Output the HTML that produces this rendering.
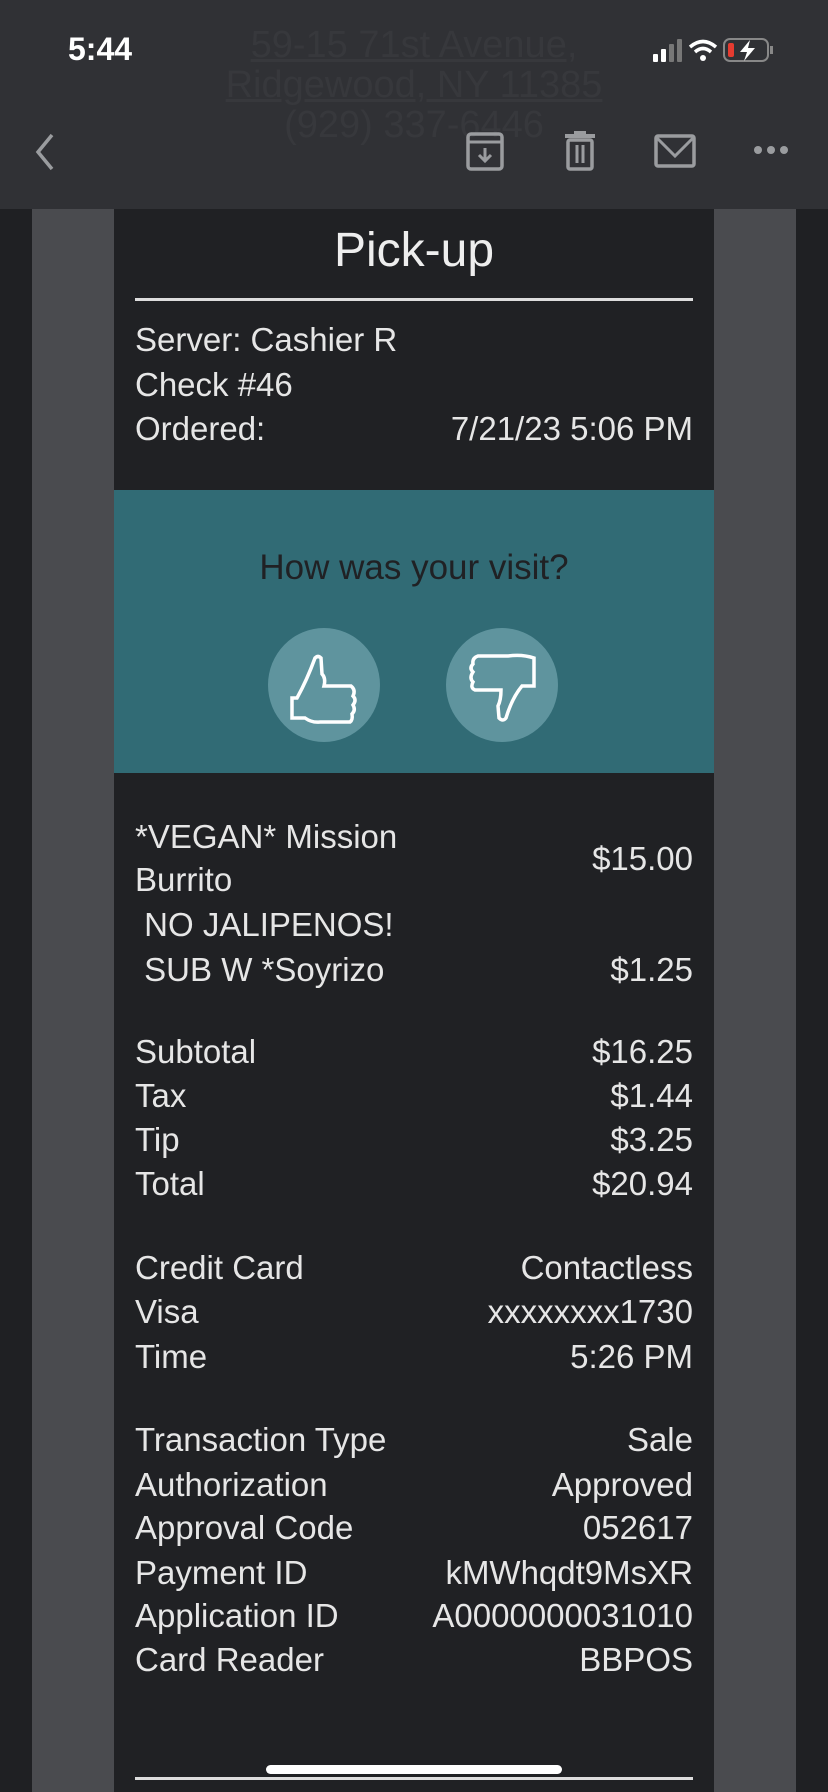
<!DOCTYPE html>
<html><head><meta charset="utf-8"><style>
*{margin:0;padding:0;box-sizing:border-box}
body{width:828px;height:1792px;background:#1f2023;position:relative;overflow:hidden;font-family:"Liberation Sans",sans-serif;color:#e6e6e6}
.g{position:absolute;top:0;height:1792px;background:#4a4b4f;width:82px}
#rc{position:absolute;left:114px;width:600px;top:0;height:1792px;background:#202124}
.r{position:absolute;left:135px;width:558px;height:40px;line-height:40px;font-size:33px;display:flex;justify-content:space-between;white-space:nowrap}
#hdr{position:absolute;left:0;top:0;width:828px;height:209px;background:#303135}
.ghost{position:absolute;left:0;width:828px;text-align:center;color:#37383c;font-size:38px;text-decoration:underline}
</style></head><body>
<div class="g" style="left:32px"></div><div class="g" style="left:714px"></div>
<div id="rc"></div>
<div id="hdr">
 <div class="ghost" style="top:24px">59-15 71st Avenue,</div>
 <div class="ghost" style="top:64px">Ridgewood, NY 11385</div>
 <div class="ghost" style="top:104px;text-decoration:none">(929) 337-6446</div>
 <div style="position:absolute;left:68px;top:31px;font-size:32px;font-weight:bold;color:#fff">5:44</div>
 <svg style="position:absolute;left:650px;top:36px" width="150" height="30" viewBox="0 0 150 30">
  <rect x="3" y="18" width="5" height="8" rx="1" fill="#fff"/><rect x="11" y="13" width="5" height="13" rx="1" fill="#fff"/><rect x="19" y="8" width="5" height="18" rx="1" fill="#777"/><rect x="27" y="3" width="5" height="23" rx="1" fill="#777"/>
  <path d="M40 11 Q53 0 66 11" stroke="#fff" stroke-width="3.5" fill="none"/><path d="M45 16 Q53 9 61 16" stroke="#fff" stroke-width="3.5" fill="none"/><circle cx="53" cy="22" r="3" fill="#fff"/>
  <rect x="74" y="3" width="44" height="22" rx="6" stroke="#888" stroke-width="2" fill="none"/><rect x="78" y="7" width="6" height="14" rx="2" fill="#e53b30"/>
  <path d="M100 4 L90 16 H97 L94 25 L105 12 H98 Z" fill="#fff"/><rect x="120" y="10" width="3" height="8" fill="#888"/>
 </svg>
 <svg style="position:absolute;left:30px;top:132px" width="30" height="40"><path d="M22 3 L8 20 L22 37" stroke="#9a9c9f" stroke-width="3.5" fill="none"/></svg>
 <svg style="position:absolute;left:466px;top:132px" width="40" height="40"><rect x="2" y="2" width="34" height="35" rx="3" stroke="#9a9c9f" stroke-width="3.5" fill="none"/><line x1="2" y1="10" x2="36" y2="10" stroke="#9a9c9f" stroke-width="3"/><path d="M19 16 V28 M13 23 L19 29 L25 23" stroke="#9a9c9f" stroke-width="3" fill="none"/></svg>
 <svg style="position:absolute;left:562px;top:130px" width="36" height="42"><rect x="3" y="4" width="30" height="4" fill="#9a9c9f"/><rect x="12" y="1" width="12" height="4" fill="#9a9c9f"/><rect x="6" y="10" width="24" height="29" rx="2" stroke="#9a9c9f" stroke-width="3.5" fill="none"/><line x1="15" y1="15" x2="15" y2="33" stroke="#9a9c9f" stroke-width="3"/><line x1="21" y1="15" x2="21" y2="33" stroke="#9a9c9f" stroke-width="3"/></svg>
 <svg style="position:absolute;left:654px;top:134px" width="44" height="36"><rect x="2" y="2" width="38" height="30" rx="2" stroke="#9a9c9f" stroke-width="3.5" fill="none"/><path d="M3 4 L21 22 L39 4" stroke="#9a9c9f" stroke-width="3" fill="none"/></svg>
 <div style="position:absolute;left:754px;top:146px;width:40px;display:flex;gap:5px"><i style="width:8px;height:8px;border-radius:50%;background:#9a9c9f"></i><i style="width:8px;height:8px;border-radius:50%;background:#9a9c9f"></i><i style="width:8px;height:8px;border-radius:50%;background:#9a9c9f"></i></div>
</div>
<div style="position:absolute;left:114px;width:600px;top:223px;text-align:center;font-size:48px;color:#eee">Pick-up</div>
<div style="position:absolute;left:135px;width:558px;top:298px;height:3px;background:#ddd"></div>
<div class="r" style="top:320px"><span>Server: Cashier R</span></div>
<div class="r" style="top:365px"><span>Check #46</span></div>
<div class="r" style="top:409px"><span>Ordered:</span><span>7/21/23 5:06 PM</span></div>
<div style="position:absolute;left:114px;width:600px;top:490px;height:283px;background:#316b75"></div>
<div style="position:absolute;left:114px;width:600px;top:548px;text-align:center;font-size:35px;color:#202124">How was your visit?</div>
<div style="position:absolute;left:268px;top:628px;width:112px;height:114px;border-radius:50%;background:#5f949e"></div>
<div style="position:absolute;left:446px;top:628px;width:112px;height:114px;border-radius:50%;background:#5f949e"></div>
<svg style="position:absolute;left:288px;top:650px" width="76" height="75" viewBox="0 0 76 75"><path d="M4 48 V68 H17 Q24 73 32 72 H62 Q65 70 64 64 Q68 60 65 55 Q69 50 65 46 Q68 40 63 36 H36 Q38 28 34 24 L33 8 Q30 5 27 8 Q19 30 9 48 Z" stroke="#fff" stroke-width="3.5" fill="none"/></svg>
<svg style="position:absolute;left:464px;top:650px" width="76" height="75" viewBox="0 0 76 75"><path d="M70 30 V8 Q58 4 44 6 H14 Q8 8 9 14 Q5 18 9 22 Q5 28 9 32 Q6 38 11 40 H37 Q37 50 34 56 L35 68 Q39 72 42 68 Q48 48 58 36 H70 Z" stroke="#fff" stroke-width="3.5" fill="none"/></svg>
<div class="r" style="top:817px"><span>*VEGAN* Mission</span></div>
<div class="r" style="top:860px"><span>Burrito</span></div>
<div class="r" style="top:839px;justify-content:flex-end"><span>$15.00</span></div>
<div class="r" style="top:905px"><span>&nbsp;NO JALIPENOS!</span></div>
<div class="r" style="top:950px"><span>&nbsp;SUB W *Soyrizo</span><span>$1.25</span></div>
<div class="r" style="top:1032px"><span>Subtotal</span><span>$16.25</span></div>
<div class="r" style="top:1076px"><span>Tax</span><span>$1.44</span></div>
<div class="r" style="top:1120px"><span>Tip</span><span>$3.25</span></div>
<div class="r" style="top:1164px"><span>Total</span><span>$20.94</span></div>
<div class="r" style="top:1248px"><span>Credit Card</span><span>Contactless</span></div>
<div class="r" style="top:1292px"><span>Visa</span><span>xxxxxxxx1730</span></div>
<div class="r" style="top:1337px"><span>Time</span><span>5:26 PM</span></div>
<div class="r" style="top:1420px"><span>Transaction Type</span><span>Sale</span></div>
<div class="r" style="top:1465px"><span>Authorization</span><span>Approved</span></div>
<div class="r" style="top:1508px"><span>Approval Code</span><span>052617</span></div>
<div class="r" style="top:1553px"><span>Payment ID</span><span>kMWhqdt9MsXR</span></div>
<div class="r" style="top:1596px"><span>Application ID</span><span>A0000000031010</span></div>
<div class="r" style="top:1640px"><span>Card Reader</span><span>BBPOS</span></div>
<div style="position:absolute;left:135px;width:558px;top:1777px;height:3px;background:#ddd"></div>
<div style="position:absolute;left:266px;width:296px;top:1765px;height:9px;border-radius:5px;background:#fff"></div>
</body></html>
